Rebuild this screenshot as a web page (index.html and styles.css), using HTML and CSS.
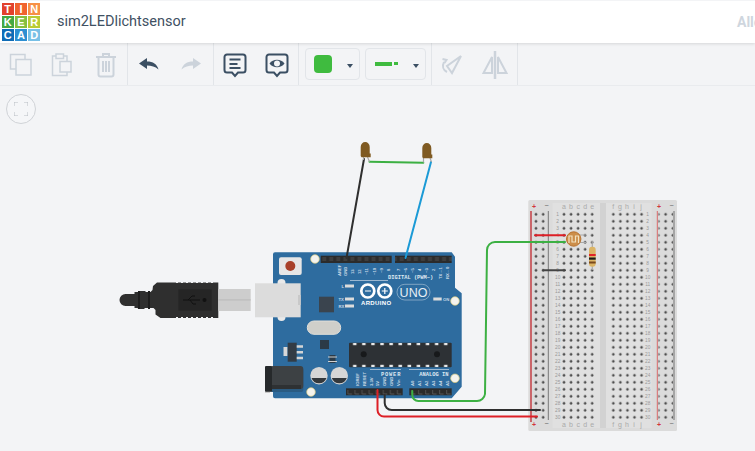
FILE: index.html
```html
<!DOCTYPE html>
<html lang="en">
<head>
<meta charset="utf-8">
<title>sim2LEDlichtsensor</title>
<link rel="stylesheet" href="styles.css">
</head>
<body>
<header class="topbar">
  <div class="logo">
    <span class="c1">T</span><span class="c2">I</span><span class="c3">N</span>
    <span class="c4">K</span><span class="c5">E</span><span class="c6">R</span>
    <span class="c7">C</span><span class="c8">A</span><span class="c9">D</span>
  </div>
  <h1 class="title">sim2LEDlichtsensor</h1>
  <span class="all">Alle</span>
</header>
<nav class="toolbar">
  <div class="group g3">
    <button class="tool"><svg width="24" height="26" class="off"><rect x="1.500" y="2.500" width="14.500" height="14.500"/><rect x="7" y="7.500" width="15" height="15.500" class="cover"/></svg></button>
    <button class="tool"><svg width="24" height="26" class="off"><rect x="1.500" y="4" width="14.500" height="19.500"/><rect x="5" y="2" width="7.500" height="4.500" class="cover"/><rect x="9" y="9.500" width="11" height="10.500" class="cover"/></svg></button>
    <button class="tool"><svg width="24" height="26" class="off thick"><path d="M2 5h20M9 5V2h6v3M4.500 5.500v17a2 2 0 0 0 2 2h11a2 2 0 0 0 2-2v-17M9 9v11M12 9v11M15 9v11"/></svg></button>
  </div>
  <div class="group g2">
    <button class="tool tool-arrow"><svg width="20" height="12"><path class="solid" d="M0 5.500L8 0v3.500c6 0 10 2.500 11.500 8C16 8.500 12.500 7.500 8 7.500V11z"/></svg></button>
    <button class="tool tool-arrow"><svg width="20" height="12"><path class="soft" d="M20 5.500L12 0v3.500c-6 0-10 2.500-11.500 8C4 8.500 7.500 7.500 12 7.500V11z"/></svg></button>
  </div>
  <div class="group g2">
    <button class="tool"><svg width="24" height="26" class="on"><path d="M4 2.500h16a2.500 2.500 0 0 1 2.500 2.500v13a2.500 2.500 0 0 1-2.500 2.500h-5l-3 3.500-3-3.500H4A2.500 2.500 0 0 1 1.500 18V5A2.500 2.500 0 0 1 4 2.500z"/><path d="M6.500 7.500h11M6.500 12h8M6.500 16h11"/></svg></button>
    <button class="tool"><svg width="24" height="26" class="on"><path d="M4 2.500h16a2.500 2.500 0 0 1 2.500 2.500v13a2.500 2.500 0 0 1-2.500 2.500h-5l-3 3.500-3-3.500H4A2.500 2.500 0 0 1 1.500 18V5A2.500 2.500 0 0 1 4 2.500z"/><path class="eye" d="M4.500 11.500C8 6.500 16 6.500 19.500 11.500 16 16.500 8 16.500 4.500 11.500z"/><circle class="pupil" cx="12" cy="11.500" r="3"/></svg></button>
  </div>
  <div class="group pickers">
    <button class="picker"><span class="swatch"></span><span class="caret"></span></button>
    <button class="picker"><span class="wire"><span class="wire-long"></span><span class="wire-short"></span></span><span class="caret"></span></button>
  </div>
  <div class="group g2">
    <button class="tool tool-rot"><svg width="22" height="20" class="off thick"><path d="M20 1L6 11l5 7z"/><path d="M3 7c-2 4-1 8 3 10M1.500 4l4 1-2 3"/></svg></button>
    <button class="tool tool-flip"><svg width="26" height="28" class="off thick"><path d="M10 6L1.500 22H10zM16 6l8.500 16H16z"/><path d="M13 0v28" class="bar"/></svg></button>
  </div>
</nav>
<main class="canvas">
  <button class="fit" aria-label="Fit view"><svg width="14" height="14" class="fit-icon"><path d="M0 4V0h4M10 0h4v4M14 10v4h-4M4 14H0v-4"/></svg></button>
  <svg class="diagram" width="755" height="366" viewBox="0 85 755 366">
    <defs>
      <pattern id="holes" x="560.500" y="210.800" width="7.050" height="7" patternUnits="userSpaceOnUse"><circle cx="3.500" cy="3.500" r="1.300" fill="#444"/></pattern>
      <pattern id="holes2" x="532.400" y="210.800" width="7.200" height="7" patternUnits="userSpaceOnUse"><circle cx="3.600" cy="3.500" r="1.300" fill="#444"/></pattern>
      <pattern id="pins" x="320.700" y="255" width="7.050" height="8" patternUnits="userSpaceOnUse"><rect width="7.050" height="8" fill="#2b2b2b"/><rect x="1.500" y="2" width="4" height="4" fill="#3e3e3e"/></pattern>
      <pattern id="pinsb" x="346.500" y="388" width="7.050" height="8" patternUnits="userSpaceOnUse"><rect width="7.050" height="8" fill="#2b2b2b"/><path d="M1.500 2v4h4" fill="none" stroke="#5a5a5a" stroke-width=".8"/></pattern>
      <pattern id="chip" x="350" y="342" width="9.100" height="26" patternUnits="userSpaceOnUse"><rect x="3" y="1" width="3.500" height="2.200" fill="#e8e8e8"/><rect x="3" y="22.800" width="3.500" height="2.200" fill="#e8e8e8"/></pattern>
    </defs>

    <!-- USB cable -->
    <path class="usb" d="M125 294h9.500v-2h4l1-1h5.500l1 1h4.500l2-2 .5-4 4-3.500H218.300v35.500H160.500l-5-3.500V310l-2-2H145l-1 1h-5.500l-1-1h-3V306h-9a6 6 0 0 1 0-12z"/>
    <path class="usb-rib" d="M139 291v18M149 291v18"/>
    <path class="usb-teeth" d="M176 282.500h38M176 317.500h38"/>
    <rect x="178.300" y="289.300" width="33.400" height="21.400" fill="#252525"/>
    <path class="usb-sym" d="M183 300h17M188 300l4-4h3M190 300l3 4h3"/>
    <circle cx="204.500" cy="300" r="2" fill="#111"/>
    <rect x="218.300" y="289" width="32.400" height="22" fill="#cdcdcd"/>
    <rect x="218.300" y="299.300" width="32.400" height="1.200" fill="#bcbcbc"/>

    <!-- Arduino board -->
    <path class="board" d="M275 252.300H451.700L455 256.700V287.700L461.700 293.300V386.700L451.700 398.300H275a2 2 0 0 1-2-2V254.300a2 2 0 0 1 2-2z"/>
    <rect x="277.500" y="279" width="8" height="42" rx="4" fill="#e9e9e9"/>
    <rect x="279" y="257.300" width="22.700" height="17.700" rx="2" fill="#e6e6e6"/>
    <circle cx="290.300" cy="266" r="5" fill="#a8402a"/>
    <rect x="255" y="283.300" width="45.700" height="34" fill="#dcdcdc"/>
    <rect x="298" y="295" width="2.700" height="10" fill="#c9c9c9"/>

    <g class="mount"><circle cx="315" cy="259" r="4.300"/><circle cx="455" cy="301" r="4.300"/><circle cx="311" cy="392" r="4.300"/><circle cx="455" cy="378.300" r="4.300"/></g>

    <rect x="320.700" y="255.700" width="71" height="7.300" fill="url(#pins)"/>
    <rect x="395" y="255.700" width="56.700" height="7.300" fill="url(#pins)"/>
    <rect x="346" y="388.300" width="56.700" height="7" fill="url(#pinsb)"/>
    <rect x="409.300" y="388.300" width="42.400" height="7" fill="url(#pinsb)"/>

    <g class="pinlabel">
      <text transform="translate(340.500 276) rotate(-90)">AREF</text>
      <text transform="translate(347.300 276) rotate(-90)">GND</text>
      <text transform="translate(354.300 274) rotate(-90)">13</text>
      <text transform="translate(361.300 274) rotate(-90)">12</text>
      <text transform="translate(368.300 275) rotate(-90)">~11</text>
      <text transform="translate(375.500 275) rotate(-90)">~10</text>
      <text transform="translate(382.500 273) rotate(-90)">~9</text>
      <text transform="translate(389.500 271) rotate(-90)">8</text>
      <text transform="translate(400 271) rotate(-90)">7</text>
      <text transform="translate(407.200 273) rotate(-90)">~6</text>
      <text transform="translate(414.200 273) rotate(-90)">~5</text>
      <text transform="translate(421 271) rotate(-90)">4</text>
      <text transform="translate(428.200 273) rotate(-90)">~3</text>
      <text transform="translate(435 271) rotate(-90)">2</text>
      <text transform="translate(442.200 279) rotate(-90)">TX→1</text>
      <text transform="translate(449.200 279) rotate(-90)">RX←0</text>
      <text transform="translate(358.800 386) rotate(-90)">IOREF</text>
      <text transform="translate(365.500 386) rotate(-90)">RESET</text>
      <text transform="translate(372.500 386) rotate(-90)">3.3V</text>
      <text transform="translate(379.200 386) rotate(-90)">5V</text>
      <text transform="translate(386.200 386) rotate(-90)">GND</text>
      <text transform="translate(393.200 386) rotate(-90)">GND</text>
      <text transform="translate(400.200 386) rotate(-90)">Vin</text>
      <text transform="translate(413.800 386) rotate(-90)">A0</text>
      <text transform="translate(420.800 386) rotate(-90)">A1</text>
      <text transform="translate(428.200 386) rotate(-90)">A2</text>
      <text transform="translate(435.200 386) rotate(-90)">A3</text>
      <text transform="translate(442.200 386) rotate(-90)">A4</text>
      <text transform="translate(449.200 386) rotate(-90)">A5</text>
      <text x="341.500" y="287.500">L</text>
      <text x="338.500" y="300.800">TX</text>
      <text x="338.500" y="307.500">RX</text>
      <text x="443" y="301">ON</text>
    </g>
    <text class="silk" x="388" y="278.500">DIGITAL (PWM~)</text>
    <text class="silk silk-wide" x="381" y="375.500">POWER</text>
    <text class="silk" x="419.300" y="375.500">ANALOG IN</text>
    <path class="silk-line" d="M350 280.500H388M370 369.500H401M409 369.500H449"/>

    <g class="led-pad"><rect x="345" y="284.500" width="9" height="3"/><rect x="345" y="297.500" width="9" height="3"/><rect x="345" y="304.500" width="9" height="3"/><rect x="433.300" y="297.500" width="8.400" height="3"/></g>

    <g class="inf"><circle cx="367.800" cy="291" r="6.500"/><circle cx="384.800" cy="291" r="6.500"/></g>
    <path class="inf-mark" d="M365 291h6M381.800 291h6M384.800 288v6"/>
    <text class="arduino" x="361" y="305">ARDUINO</text>
    <rect class="uno-pill" x="397" y="284.300" width="33" height="15.700" rx="7.800"/>
    <text class="uno" x="413.500" y="297">UNO</text>

    <rect x="319" y="296.700" width="15" height="15.600" fill="#3a444e"/>
    <rect x="307.300" y="321" width="33.400" height="13.300" rx="6.600" fill="#cfcfca" stroke="#e2e0da"/>
    <rect x="320" y="340" width="9" height="9" fill="#2b3a47"/>
    <rect x="283.500" y="347" width="4" height="9" fill="#d8d8d8"/>
    <rect x="287.700" y="342.700" width="9" height="19" fill="#333c45"/>
    <path d="M296.700 346.500h6.300M296.700 352.200h6.300M296.700 358h6.300" stroke="#d5d5d5" stroke-width="2.400"/>
    <rect x="329.500" y="355" width="6" height="8" fill="#2b3a47"/>
    <path d="M328 357h9M328 361.500h9" stroke="#cfcfcf" stroke-width="1"/>

    <rect x="349" y="342.700" width="102.700" height="24.600" rx="1" fill="#2d3135"/>
    <rect x="350" y="342" width="100" height="26" fill="url(#chip)"/>
    <circle cx="363.700" cy="354.300" r="3" fill="#17191b"/>
    <circle cx="437" cy="354.300" r="3" fill="#17191b"/>

    <g class="cap">
      <circle cx="319" cy="375.700" r="8.700" fill="#d6d6d6"/><path d="M311.500 378h15a8 8 0 0 1-15 0z" fill="#33383c"/>
      <circle cx="339.300" cy="375.700" r="8.700" fill="#d6d6d6"/><path d="M331.800 378h15a8 8 0 0 1-15 0z" fill="#33383c"/>
    </g>

    <rect x="270" y="368" width="33.300" height="24" rx="2" fill="#2a5b82"/>
    <rect x="270" y="366" width="33.300" height="23" rx="3" fill="#3d4144"/>
    <rect x="265" y="367" width="5" height="26" fill="#c8c8c8"/>
    <rect x="265" y="366" width="7" height="25.700" rx="1" fill="#26292b"/>
    <rect x="272" y="385" width="29" height="4" fill="#2e3133"/>

    <!-- Breadboard -->
    <rect x="528.300" y="200" width="148.700" height="231" rx="1.500" fill="#dbdbdb"/>
    <rect x="552.500" y="203" width="99.200" height="225" fill="#e0e0e0"/>
    <rect x="600" y="203" width="6" height="225" fill="#d2d2d2"/>
    <rect x="560.500" y="210.800" width="35.250" height="210" fill="url(#holes)"/>
    <rect x="609.800" y="210.800" width="35.250" height="210" fill="url(#holes)"/>
    <rect x="532.400" y="210.800" width="14.400" height="210" fill="url(#holes2)"/>
    <rect x="658.500" y="210.800" width="14.400" height="210" fill="url(#holes2)"/>
    <path d="M531 211V422" stroke="#c2272d" stroke-width="1.300"/>
    <path d="M548.300 211V420" stroke="#777" stroke-width="1"/>
    <path d="M657.300 211V420" stroke="#d9686a" stroke-width="1"/>
    <path d="M674 211V420" stroke="#a5a5a5" stroke-width="2"/>

    <g class="rail-mark">
      <text class="plus" x="534" y="209">+</text><text x="546.500" y="208">−</text>
      <text class="plus" x="659" y="209">+</text><text x="671.500" y="208">−</text>
      <text class="plus" x="534" y="427">+</text><text x="546.500" y="426">−</text>
      <text class="plus" x="659" y="427">+</text><text x="671.500" y="426">−</text>
    </g>
    <g class="letters">
      <text x="564" y="209">a</text><text x="571" y="209">b</text><text x="578.300" y="209">c</text><text x="585.300" y="209">d</text><text x="592.300" y="209">e</text>
      <text x="613.300" y="209">f</text><text x="620" y="209">g</text><text x="627" y="209">h</text><text x="634" y="209">i</text><text x="641" y="209">j</text>
      <text x="564" y="426.500">a</text><text x="571" y="426.500">b</text><text x="578.300" y="426.500">c</text><text x="585.300" y="426.500">d</text><text x="592.300" y="426.500">e</text>
      <text x="613.300" y="426.500">f</text><text x="620" y="426.500">g</text><text x="627" y="426.500">h</text><text x="634" y="426.500">i</text><text x="641" y="426.500">j</text>
    </g>
    <g class="rows">
      <text x="557.700" y="216">1</text><text x="557.700" y="223">2</text><text x="557.700" y="230">3</text><text x="557.700" y="237">4</text><text x="557.700" y="244">5</text><text x="557.700" y="251">6</text><text x="557.700" y="258">7</text><text x="557.700" y="265">8</text><text x="557.700" y="272">9</text><text x="557.700" y="279">10</text>
      <text x="557.700" y="286">11</text><text x="557.700" y="293">12</text><text x="557.700" y="300">13</text><text x="557.700" y="307">14</text><text x="557.700" y="314">15</text><text x="557.700" y="321">16</text><text x="557.700" y="328">17</text><text x="557.700" y="335">18</text><text x="557.700" y="342">19</text><text x="557.700" y="349">20</text>
      <text x="557.700" y="356">21</text><text x="557.700" y="363">22</text><text x="557.700" y="370">23</text><text x="557.700" y="377">24</text><text x="557.700" y="384">25</text><text x="557.700" y="391">26</text><text x="557.700" y="398">27</text><text x="557.700" y="405">28</text><text x="557.700" y="412">29</text><text x="557.700" y="419">30</text>
      <text x="647.700" y="216">1</text><text x="647.700" y="223">2</text><text x="647.700" y="230">3</text><text x="647.700" y="237">4</text><text x="647.700" y="244">5</text><text x="647.700" y="251">6</text><text x="647.700" y="258">7</text><text x="647.700" y="265">8</text><text x="647.700" y="272">9</text><text x="647.700" y="279">10</text>
      <text x="647.700" y="286">11</text><text x="647.700" y="293">12</text><text x="647.700" y="300">13</text><text x="647.700" y="307">14</text><text x="647.700" y="314">15</text><text x="647.700" y="321">16</text><text x="647.700" y="328">17</text><text x="647.700" y="335">18</text><text x="647.700" y="342">19</text><text x="647.700" y="349">20</text>
      <text x="647.700" y="356">21</text><text x="647.700" y="363">22</text><text x="647.700" y="370">23</text><text x="647.700" y="377">24</text><text x="647.700" y="384">25</text><text x="647.700" y="391">26</text><text x="647.700" y="398">27</text><text x="647.700" y="405">28</text><text x="647.700" y="412">29</text><text x="647.700" y="419">30</text>
    </g>

    <!-- Wires -->
    <g class="w">
      <path stroke="#2f2f2f" d="M364 159L346.500 258"/>
      <path stroke="#1b9ad6" d="M431 162L405.500 258"/>
      <path stroke="#3cb043" d="M369.500 161.700L423.300 162.700"/>
      <path stroke="#3cb043" d="M412.300 391v4a6 6 0 0 0 6 6H477a8 8 0 0 0 8-7L487 250a8 8 0 0 1 8-8h70"/>
      <path stroke="#2f2f2f" d="M384.700 395v8a7 7 0 0 0 7 7H540"/>
      <path stroke="#dd1f26" d="M377.500 390v20a6.500 6.500 0 0 0 6.500 6.500H537"/>
      <path stroke="#dd1f26" d="M535 235.300H565"/>
      <path stroke="#444" d="M543 270.300H565"/>
    </g>
    <path class="lead" d="M363.500 157V160M367.500 157L369.500 161.700M423.500 158V162.500M430 158L431.500 162"/>

    <!-- LEDs -->
    <path class="bulb" d="M360.700 147a4.500 5 0 0 1 9 0V153.500h1v3.800H361.500L360.700 156z"/>
    <path class="bulb" d="M422.300 148a4.500 5 0 0 1 9 0V154.500h1v3.800H423L422.300 157z"/>

    <!-- Photoresistor -->
    <path class="lead" d="M580 235H586M580 242.500H586"/>
    <circle cx="573.700" cy="239" r="7.200" fill="#cc8e4a" stroke="#b9722e"/>
    <path d="M569 243v-7h3v6h3.500v-6h3v7" fill="none" stroke="#f2e2c0" stroke-width="1.200"/>

    <!-- Resistor -->
    <path class="lead" d="M592.300 241V247M592.300 266V270"/>
    <rect x="589" y="246.700" width="6.700" height="20" rx="3" fill="#dcb566"/>
    <rect x="589" y="254" width="6.700" height="2" fill="#e0242a"/>
    <rect x="589" y="257.500" width="6.700" height="2.200" fill="#1a1a1a"/>
    <rect x="589" y="261.500" width="6.700" height="2" fill="#7a4a1e"/>
  </svg>
</main>
</body>
</html>
```
FILE: styles.css
```css
* { box-sizing: border-box; }
html, body { margin: 0; height: 100%; }
body {
  width: 755px;
  height: 451px;
  overflow: hidden;
  background: #f3f4f6;
  font-family: Roboto, "Liberation Sans", sans-serif;
  display: flex;
  flex-direction: column;
}
.topbar {
  height: 43px;
  flex: none;
  display: flex;
  align-items: center;
  background: #fff;
  border-top: 1px solid #f3f4f6;
  padding-left: 1.500px;
  box-shadow: 0 1px 3px rgba(0,0,0,.12);
  position: relative;
  z-index: 2;
  overflow: hidden;
}
.logo {
  width: 39px;
  height: 39px;
  display: grid;
  grid-template-columns: repeat(3, 12.300px);
  grid-template-rows: repeat(3, 12.300px);
  gap: 1px;
  flex: none;
  font: 700 11px/12.300px "Liberation Sans", sans-serif;
  color: #fff;
  text-align: center;
}
.c1 { background: #e2412d; }
.c2 { background: #f0632d; }
.c3 { background: #f79045; }
.c4 { background: #45a843; }
.c5 { background: #84bf41; }
.c6 { background: #b8cc35; }
.c7 { background: #0f6cb6; }
.c8 { background: #2d8fd2; }
.c9 { background: #78c0e6; }
.title {
  margin: 0 0 0 16.500px;
  font: 400 14.500px/20px Roboto, sans-serif;
  color: #3f5163;
  white-space: nowrap;
}
.all {
  position: absolute;
  left: 737px;
  top: 11px;
  font: 700 14px/20px Roboto, sans-serif;
  color: #cfd6de;
  white-space: nowrap;
}
.toolbar {
  height: 43px;
  flex: none;
  display: flex;
  background: #f3f4f6;
  border-bottom: 1px solid #e9ebee;
}
.group {
  display: flex;
  align-items: center;
  border-right: 1px solid #e2e5e9;
  flex: none;
}
.g3 { width: 128px; }
.g2 { width: 85.670px; }
.pickers {
  width: 132.600px;
  padding: 0 6px;
  gap: 5.600px;
}
.tool {
  flex: 1;
  height: 100%;
  border: 0;
  padding: 2px 0 0;
  background: none;
  display: flex;
  align-items: center;
  justify-content: center;
}
.tool-arrow { padding-top: 0; }
.tool-rot { padding-right: 4px; }
.tool-flip { padding-right: 2px; }
.tool svg { display: block; overflow: visible; }
.off { fill: none; stroke: #ccd3db; stroke-width: 1.500; }
.off .cover { fill: #f3f4f6; }
.thick { stroke-width: 2; }
.off .bar { stroke-width: 2.500; }
.on { fill: none; stroke: #3b4f63; stroke-width: 2; }
.on .eye { fill: #3b4f63; stroke: none; }
.on .pupil { fill: #f3f4f6; stroke: none; }
.solid { fill: #3b4f63; }
.soft { fill: #ccd3db; }
.picker {
  height: 32px;
  width: 54.500px;
  padding: 0;
  border: 1px solid #e2e5e9;
  border-radius: 4px;
  background: none;
  display: flex;
  align-items: center;
  flex: none;
  position: relative;
}
.picker + .picker { width: 60.500px; }
.swatch {
  width: 17.500px;
  height: 17.500px;
  margin-left: 8px;
  border-radius: 4px;
  background: #3fbb3f;
}
.wire { display: flex; gap: 1.500px; margin-left: 9px; align-items: center; margin-top: -1px; }
.wire-long { width: 17px; height: 4px; background: #3fbb3f; }
.wire-short { width: 4.500px; height: 3px; background: #3fbb3f; }
.caret {
  position: absolute;
  right: 6px;
  top: 15px;
  border-style: solid;
  border-width: 4px 3.500px 0;
  border-color: #3b4f63 transparent transparent;
}
.canvas {
  flex: 1;
  position: relative;
  background: #f3f4f6;
  overflow: hidden;
}
.diagram { display: block; position: absolute; left: 0; top: -1px; }
.fit {
  position: absolute;
  left: 6px;
  top: 8px;
  width: 30px;
  height: 30px;
  border-radius: 50%;
  border: 1px solid #d0d3d7;
  background: #f5f6f8;
  padding: 0;
  display: flex;
  align-items: center;
  justify-content: center;
}
.fit-icon { fill: none; stroke: #b9bec4; stroke-width: 1; display: block; }
.board { fill: #2e6c9f; }
.mount circle { fill: #f4f3ee; stroke: #d8c97a; stroke-width: .7; }
.usb { fill: #2f2f2f; }
.usb-rib { stroke: #1d1d1d; stroke-width: 2; fill: none; }
.usb-teeth { stroke: #f3f4f6; stroke-width: 1; stroke-dasharray: 2 3; fill: none; }
.usb-sym { stroke: #111; stroke-width: 1; fill: none; }
.pinlabel text { font: 700 4.200px "Liberation Sans", sans-serif; fill: #c9d9e6; }
.silk { font: 700 5.400px "Liberation Mono", monospace; fill: #dfe9f1; }
.silk-wide { letter-spacing: .8px; }
.silk-line { stroke: #c9d9e6; stroke-width: .7; fill: none; }
.led-pad rect { fill: #dcdcdc; }
.inf circle { fill: none; stroke: #fff; stroke-width: 2.700; }
.inf-mark { stroke: #fff; stroke-width: 1.200; fill: none; }
.arduino { font: 700 6px "Liberation Sans", sans-serif; letter-spacing: .35px; fill: #fff; }
.uno-pill { fill: none; stroke: #b6cbdc; stroke-width: .6; }
.uno { font: 400 12.500px "Liberation Sans", sans-serif; fill: #e6eef4; text-anchor: middle; }
.rail-mark text { font: 700 7px "Liberation Sans", sans-serif; fill: #888; text-anchor: middle; }
.rail-mark .plus { fill: #d2353a; }
.letters text { font: 400 7px "Liberation Sans", sans-serif; fill: #aaa; text-anchor: middle; }
.rows text { font: 400 4.800px "Liberation Sans", sans-serif; fill: #999; text-anchor: middle; }
.w path { fill: none; stroke-width: 2; stroke-linecap: round; }
.lead { stroke: #a8a8a8; stroke-width: 1.200; fill: none; }
.bulb { fill: #7f5a22; }
```
